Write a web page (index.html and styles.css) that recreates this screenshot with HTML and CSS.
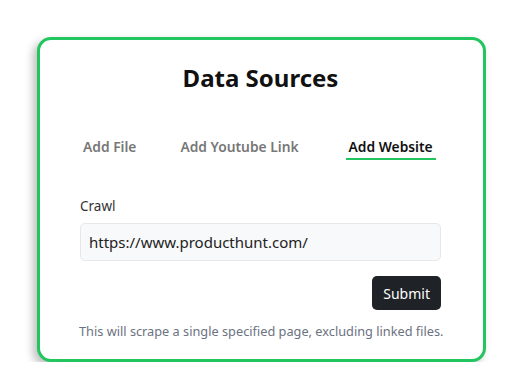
FILE: index.html
```html
<!DOCTYPE html>
<html lang="en">
<head>
    <meta charset="UTF-8">
    <meta name="viewport" content="width=device-width, initial-scale=1.0">
    <title>Data Sources</title>
    <link rel="stylesheet" href="styles.css">
</head>
<body>
    <div class="card">
        <h1 class="card-title">Data Sources</h1>

        <!-- tabs -->
        <div class="tabs">
            <button class="tab">Add File</button>
            <button class="tab">Add Youtube Link</button>
            <button class="tab active">Add Website</button>
        </div>

        <!-- crawl form -->
        <div class="form">
            <label class="field-label" for="crawlUrl">Crawl</label>
            <input type="text" id="crawlUrl" class="url-input" value="https://www.producthunt.com/">
            <div class="actions">
                <button class="submit-button">Submit</button>
            </div>
            <p class="hint">This will scrape a single specified page, excluding linked files.</p>
        </div>
    </div>
</body>
</html>
```

FILE: styles.css
```css
* {
    box-sizing: border-box;
    margin: 0;
    padding: 0;
}

body {
    font-family: "Noto Sans", "Open Sans", sans-serif;
    background-color: white;
    padding: 37px 0 0 37px;
}

.card {
    width: 449px;
    height: 325px;
    border: 3px solid #22c55e;
    border-radius: 14px;
    background-color: white;
    box-shadow: -4px 4px 8px rgba(0,0,0,0.25);
    padding: 22px 42px 0 40px;
}

.card-title {
    font-size: 24px;
    font-weight: 700;
    text-align: center;
    color: #111;
    line-height: 32px;
}

.tabs {
    display: flex;
    margin-top: 43px;
    padding-left: 3px;
}

.tab {
    background: none;
    border: none;
    font-family: inherit;
    font-size: 13.8px;
    font-weight: 600;
    color: #777;
    padding: 0 3px 2px;
    border-bottom: 2px solid transparent;
    margin-left: -3px;
}

.tab + .tab {
    margin-left: 38px;
}

.tab.active {
    color: #111;
    border-bottom-color: #22c55e;
    margin-left: 44px;
}

.form {
    margin-top: 37px;
}

.field-label {
    display: block;
    font-size: 13.5px;
    color: #333;
    margin-bottom: 8px;
}

.url-input {
    width: 361px;
    height: 38px;
    padding: 0 8px;
    border: 1px solid #e5e7eb;
    border-radius: 5px;
    background-color: #f8f9fa;
    font-family: inherit;
    font-size: 15px;
    color: #222;
}

.actions {
    display: flex;
    justify-content: flex-end;
    width: 361px;
    margin-top: 15px;
}

.submit-button {
    background-color: #1f2328;
    color: white;
    border: none;
    border-radius: 5px;
    font-family: inherit;
    font-size: 14px;
    padding: 0 11px;
    height: 34px;
}

.hint {
    font-size: 12.75px;
    color: #6b7280;
    margin-top: 12px;
    margin-left: -1px;
    white-space: nowrap;
}
```
